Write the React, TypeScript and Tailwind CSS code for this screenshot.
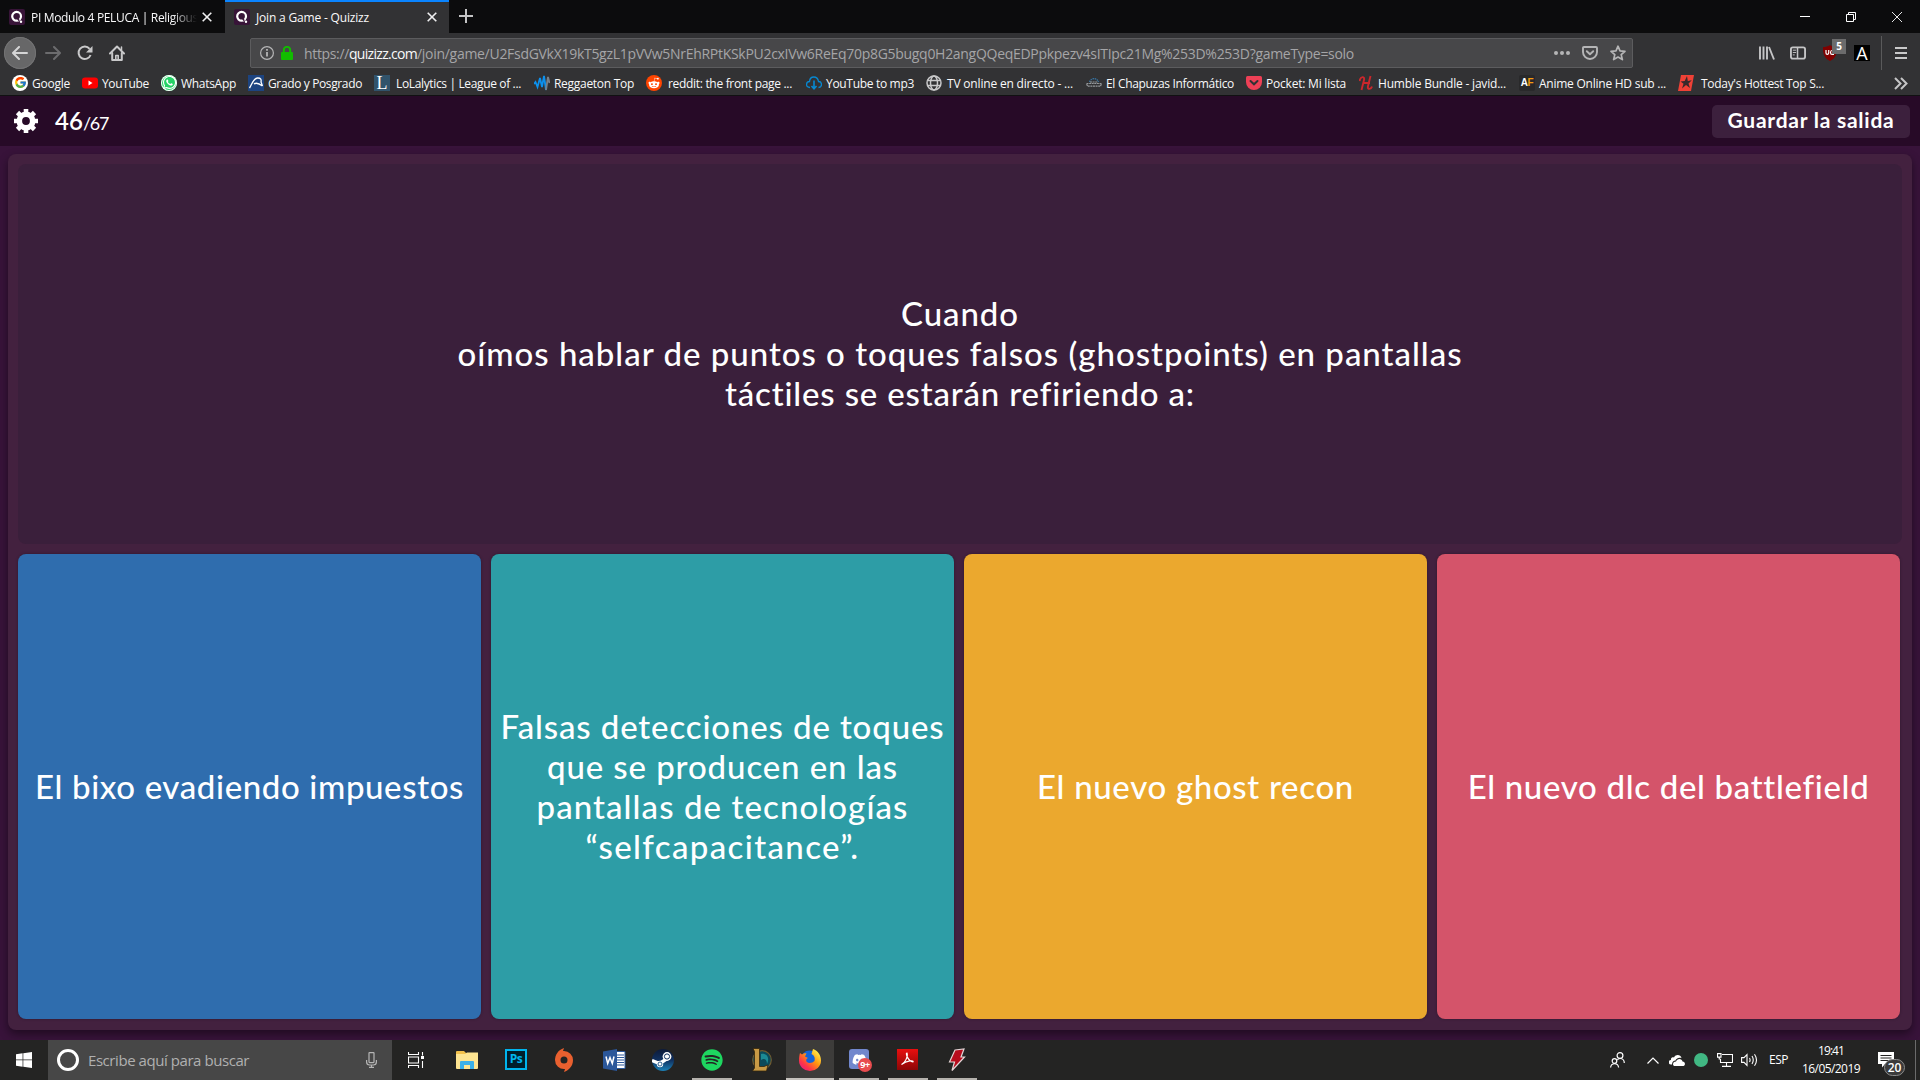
import { useLayoutEffect, useRef, useState } from "react";
import type { ReactNode } from "react";
import { FcGoogle } from "react-icons/fc";
import { FaWhatsapp, FaRedditAlien, FaSpotify, FaDiscord } from "react-icons/fa";

/* Spreads one line of text over an exact width by adjusting its letter spacing. */
function Fit({ w, children, className = "" }: { w: number; children: string; className?: string }) {
  const ref = useRef<HTMLSpanElement>(null);
  const [spacing, setSpacing] = useState(0);
  useLayoutEffect(() => {
    if (ref.current) {
      const natural = ref.current.getBoundingClientRect().width;
      setSpacing((w - natural) / children.length);
    }
  }, [w, children]);
  return (
    <span ref={ref} className={`inline-block whitespace-pre ${className}`} style={{ letterSpacing: `${spacing}px` }}>
      {children}
    </span>
  );
}

function QuizizzIcon() {
  return (
    <svg width="16" height="16" viewBox="0 0 16 16">
      <rect width="16" height="16" rx="2" fill="#381438" />
      <circle cx="7.6" cy="7.3" r="4.4" fill="none" stroke="#fff" strokeWidth="2.2" />
      <path d="M8.5 9.5l1.8 2.2" stroke="#381438" strokeWidth="1.4" />
      <circle cx="12" cy="12.8" r="1.2" fill="#fff" />
    </svg>
  );
}

function CloseX() {
  return (
    <svg width="10" height="10" viewBox="0 0 10 10" stroke="#f0f0f1" strokeWidth="1.6">
      <path d="M.7.7l8.6 8.6M9.3.7L.7 9.3" />
    </svg>
  );
}

function TabBar() {
  return (
    <div className="flex h-[33px] bg-[#0c0c0d] text-[12px] text-[#f9f9fa]">
      <div className="flex w-[225px] items-center pl-[9px] pt-px">
        <QuizizzIcon />
        <div className="ml-[6px] w-[166px] overflow-hidden whitespace-nowrap pt-[2px] [mask-image:linear-gradient(to_right,black_85%,transparent)]">
          <Fit w={167}>PI Modulo 4 PELUCA | Religious</Fit>
        </div>
        <span className="ml-[5px]"><CloseX /></span>
      </div>
      <div className="flex w-[224px] items-center border-t-2 border-[#0a84ff] bg-[#323234] pb-px pl-[9px]">
        <QuizizzIcon />
        <div className="ml-[6px] w-[166px] pt-[2px]">
          <Fit w={113}>Join a Game - Quizizz</Fit>
        </div>
        <span className="ml-[5px]"><CloseX /></span>
      </div>
      <div className="flex items-center pl-[10px] pb-px">
        <svg width="14" height="14" viewBox="0 0 14 14" stroke="#c4c4c5" strokeWidth="2"><path d="M7 0v14M0 7h14" /></svg>
      </div>
      <div className="ml-auto flex items-center pr-[18px]">
        <svg width="10" height="10" viewBox="0 0 10 10" stroke="#fff"><path d="M0 4.500h10" /></svg>
        <svg className="ml-[36px]" width="10" height="10" viewBox="0 0 10 10" stroke="#fff" fill="none"><path d="M.5 2.500h7v7h-7zM2.500 2.500v-2h7v7h-2" /></svg>
        <svg className="ml-[36px]" width="10" height="10" viewBox="0 0 10 10" stroke="#fff" strokeWidth=".9"><path d="M0 0l10 10M10 0L0 10" /></svg>
      </div>
    </div>
  );
}

function NavBar() {
  return (
    <div className="flex h-10 items-center bg-[#323234]">
      <div className="ml-1 flex h-8 w-8 items-center justify-center rounded-full bg-[#676768] ring-1 ring-inset ring-[#737374]">
        <svg width="16" height="14" viewBox="0 0 16 14" fill="none" stroke="#d5d5d6" strokeWidth="2" strokeLinecap="round" strokeLinejoin="round"><path d="M15 7H1.500M7 1L1 7l6 6" /></svg>
      </div>
      <svg className="ml-[9px]" width="16" height="14" viewBox="0 0 16 14" fill="none" stroke="#6c6c6e" strokeWidth="2" strokeLinecap="round" strokeLinejoin="round"><path d="M1 7h13.500M9 1l6 6-6 6" /></svg>
      <svg className="ml-[16px]" width="16" height="16" viewBox="0 0 16 16" fill="none" stroke="#c9c9ca" strokeWidth="2"><path d="M12.600 3.800A6.200 6.200 0 1 0 13.600 10" /><path d="M15.500 1v6.500H9z" fill="#c9c9ca" stroke="none" /></svg>
      <svg className="ml-[16px]" width="16" height="16" viewBox="0 0 16 16" fill="none" stroke="#c9c9ca" strokeWidth="2" strokeLinejoin="round" strokeLinecap="round"><path d="M1 8.500L8 1.500l7 7" /><path d="M3.200 8v7h9.600V8" /><path d="M6.800 15v-4.500h2.400V15" strokeWidth="1.600" /><path d="M12.500 2v3" strokeWidth="1.500" /></svg>
      <div className="ml-[125px] flex h-[30px] w-[1383px] items-center rounded-[2px] border border-[#5c5c5e] bg-[#474749] text-[14px] text-[#a5a5a7]">
        <svg className="ml-[9px]" width="14" height="14" viewBox="0 0 14 14" fill="none" stroke="#b5b5b6"><circle cx="7" cy="7" r="6.400" strokeWidth="1.200" /><path d="M7 6v4.500M7 3v1.700" strokeWidth="1.800" /></svg>
        <svg className="ml-[7px]" width="12" height="14" viewBox="0 0 12 14"><path d="M2.800 7V4a3.200 3.200 0 0 1 6.400 0v3" fill="none" stroke="#12bc00" strokeWidth="2" /><rect y="6" width="12" height="8" rx="1" fill="#12bc00" /></svg>
        <div className="ml-[11px] mt-px flex whitespace-nowrap">
          <Fit w={45}>https://</Fit>
          <Fit w={68} className="text-[#f9f9fa]">quizizz.com</Fit>
          <Fit w={937}>/join/game/U2FsdGVkX19kT5gzL1pVVw5NrEhRPtKSkPU2cxIVw6ReEq70p8G5bugq0H2angQQeqEDPpkpezv4sITIpc21Mg%253D%253D?gameType=solo</Fit>
        </div>
        <div className="ml-auto flex items-center pr-[6px]">
          <svg width="16" height="4" viewBox="0 0 16 4" fill="#b5b5b6"><circle cx="2" cy="2" r="2" /><circle cx="8" cy="2" r="2" /><circle cx="14" cy="2" r="2" /></svg>
          <svg className="ml-[12px]" width="16" height="14" viewBox="0 0 16 14" fill="none" stroke="#b5b5b6" strokeWidth="1.900" strokeLinecap="round" strokeLinejoin="round"><path d="M2 1h12q1 0 1 1v4a7 7 0 0 1-14 0V2q0-1 1-1z" /><path d="M4.800 5.200L8 8.200l3.200-3" /></svg>
          <svg className="ml-[12px]" width="16" height="16" viewBox="0 0 16 16" fill="none" stroke="#b5b5b6" strokeWidth="1.700" strokeLinejoin="round"><path d="M8 1.200l2 4.700 5 .4-3.800 3.300 1.200 5L8 12l-4.400 2.600 1.200-5L1 6.300l5-.4z" /></svg>
        </div>
      </div>
      <svg className="ml-[126px]" width="16" height="14" viewBox="0 0 16 14" fill="none" stroke="#c5c5c6" strokeWidth="1.900"><path d="M1 .5v13M4.500 .5v13M8 .5v13M10 1l5 12.500" /></svg>
      <svg className="ml-[15px]" width="16" height="14" viewBox="0 0 17 14" fill="none" stroke="#c5c5c6"><rect x="1" y="1" width="15" height="12" rx="2" strokeWidth="2" /><path d="M8 1v12" strokeWidth="1.600" /><path d="M3 4h3.500M3 6.500h3.500M3 9h2" strokeWidth="1" /></svg>
      <div className="relative ml-[17px] h-5 w-[23px]">
        <svg className="mt-[2px]" width="14" height="16" viewBox="0 0 14 16"><path d="M7 0c2 1.500 4.500 2 7 2 .3 6-1 11-7 14C1 13-.3 8 0 2c2.500 0 5-.500 7-2z" fill="#800000" /><path d="M3 5v3q0 1.300 1.300 1.300T5.700 8V5M11 5.500H9q-1.500 0-1.500 1.900T9 9.300h2" stroke="#fff" fill="none" strokeWidth="1.200" /></svg>
        <span className="absolute -top-[4px] left-[9px] flex h-[15px] w-[14px] items-center justify-center bg-[#6b6b6c] text-[10px] font-bold text-white">5</span>
      </div>
      <div className="ml-[8px] flex h-4 w-4 items-center justify-center bg-black text-[18px] leading-none text-white">A</div>
      <div className="ml-[11px] h-[34px] w-px bg-[#5a5a5b]" />
      <svg className="ml-[13px]" width="12" height="12" viewBox="0 0 12 12" stroke="#c9c9ca" strokeWidth="2"><path d="M0 1h12M0 6h12M0 11h12" /></svg>
    </div>
  );
}

const bookmarks: { box: string; gap: string; label: string; w: number; icon: ReactNode }[] = [
  { box: "w-[70px]", gap: "ml-[4px]", label: "Google", w: 38, icon: <span className="flex h-4 w-4 items-center justify-center rounded-full bg-white"><FcGoogle size={13} /></span> },
  { box: "w-[79px]", gap: "ml-[4px]", label: "YouTube", w: 47, icon: <svg width="16" height="16" viewBox="0 0 16 16"><rect y="2.500" width="16" height="11" rx="3" fill="#f00" /><path d="M6.500 5.500v5L10.500 8z" fill="#fff" /></svg> },
  { box: "w-[87px]", gap: "ml-[4px]", label: "WhatsApp", w: 55, icon: <span className="flex h-4 w-4 items-center justify-center rounded-full bg-[#25d366] text-white ring-1 ring-inset ring-white"><FaWhatsapp size={15} /></span> },
  { box: "w-[126px]", gap: "ml-[4px]", label: "Grado y Posgrado", w: 94, icon: <svg width="16" height="16" viewBox="0 0 16 16"><rect width="16" height="16" fill="#1d4480" /><path d="M1.500 13C4 9.500 5 3.500 9.500 3c3.500-.2 4 2 3.500 4l1.500 4M6 9c2-1.500 4.500-1 8.500 2" fill="none" stroke="#fff" strokeWidth="1.300" /></svg> },
  { box: "w-[160px]", gap: "ml-[6px]", label: "LoLalytics | League of ...", w: 125, icon: <span className="flex h-4 w-4 items-center justify-center bg-[#31536b] font-['Liberation_Serif'] text-[18px] leading-none text-white">L</span> },
  { box: "w-[112px]", gap: "ml-[4px]", label: "Reggaeton Top", w: 80, icon: <svg width="16" height="16" viewBox="0 0 16 16" fill="none" strokeWidth="1.800"><path d="M0 9l1.500-2 2 5L6 3l2 9 2-11 2 14" stroke="#0c91ee" /><path d="M12 15l2-13 1.500 6" stroke="#77818a" /></svg> },
  { box: "w-[160px]", gap: "ml-[6px]", label: "reddit: the front page ...", w: 124, icon: <span className="flex h-4 w-4 items-center justify-center rounded-full bg-[#ff4500] text-white"><FaRedditAlien size={12} /></span> },
  { box: "w-[120px]", gap: "ml-[4px]", label: "YouTube to mp3", w: 88, icon: <svg width="16" height="16" viewBox="0 0 16 16" fill="none" stroke="#0788d1" strokeWidth="1.300"><path d="M4 12.500C-1 12.500 0 6.500 3.500 6.500c.5-6 8-6 9 0 4 0 4 6 0 6" /><path d="M8 5.500v8M5.500 11L8 13.800l2.500-2.800" strokeWidth="1.600" /></svg> },
  { box: "w-[160px]", gap: "ml-[5px]", label: "TV online en directo - ...", w: 126, icon: <svg width="16" height="16" viewBox="0 0 16 16" fill="none" stroke="#c9c9ca" strokeWidth="1.500"><circle cx="8" cy="8" r="7" /><ellipse cx="8" cy="8" rx="3.500" ry="7" /><path d="M1.500 5.500h13M1.500 10.500h13" /></svg> },
  { box: "w-[160px]", gap: "ml-[4px]", label: "El Chapuzas Informático", w: 128, icon: <svg width="16" height="16" viewBox="0 0 16 16" fill="none" strokeWidth="1.200"><path d="M3.500 7C5 2.500 11 2.500 12.500 7" stroke="#3777a8" strokeDasharray="1.500 .7" /><path d="M.5 8.500h15l-1 2.700h-13zM4 7h8" stroke="#96999c" strokeDasharray="2 .6" /></svg> },
  { box: "w-[113px]", gap: "ml-[4px]", label: "Pocket: Mi lista", w: 80, icon: <svg width="16" height="16" viewBox="0 0 16 16"><path d="M1.500 1h13Q16 1 16 2.500V7A8 8 0 0 1 0 7V2.500Q0 1 1.500 1z" fill="#ee4056" /><path d="M4.500 6L8 9.300 11.500 6" fill="none" stroke="#323234" strokeWidth="2" strokeLinecap="round" /></svg> },
  { box: "w-[160px]", gap: "ml-[3px]", label: "Humble Bundle - javid...", w: 128, icon: <svg width="16" height="16" viewBox="0 0 16 16" fill="none" stroke="#cb272c" strokeWidth="1.900"><path d="M.5 6C1.500 1 6 1 5 5L2.500 15M11.500 1L9 11c-1 4 3 3.500 4 .5M4 8h7" /></svg> },
  { box: "w-[159px]", gap: "ml-[4px]", label: "Anime Online HD sub ...", w: 127, icon: <span className="flex h-4 w-4 items-center justify-center rounded-[2px] bg-[#29292a] font-['Liberation_Sans'] text-[10px] font-bold tracking-[-0.5px] text-white">A<span className="text-[#f49b10]">F</span></span> },
  { box: "w-[180px]", gap: "ml-[7px]", label: "Today's Hottest Top S...", w: 123, icon: <svg width="16" height="16" viewBox="0 0 16 16"><path d="M3 0h13l-3 16H0z" fill="#ef4136" /><path d="M9 1l.8 5 4-.8L10.500 8.500l1.500 4.500-4-3-4 3.500 1.500-4.700L2.500 6.500l4.200-.5z" fill="#38292b" /></svg> },
];

function Bookmarks() {
  return (
    <div className="flex h-[22px] items-center bg-[#323234] pb-px pl-3 text-[12px] text-[#f9f9fa]">
      {bookmarks.map((b) => (
        <div key={b.label} className={`flex shrink-0 items-center ${b.box}`}>
          <span className="flex h-4 w-4 shrink-0 items-center -translate-y-px">{b.icon}</span>
          <span className={`flex ${b.gap}`}><Fit w={b.w}>{b.label}</Fit></span>
        </div>
      ))}
      <svg className="ml-auto mr-[12px]" width="14" height="13" viewBox="0 0 14 13" fill="none" stroke="#c5c5c6" strokeWidth="2"><path d="M1 1l5.500 5.500L1 12M7 1l5.500 5.500L7 12" /></svg>
    </div>
  );
}

const options = [
  { bg: "bg-[#2f6dae]", lines: [["El bixo evadiendo impuestos", 429]] },
  { bg: "bg-[#2d9da6]", lines: [["Falsas detecciones de toques", 444], ["que se producen en las", 351], ["pantallas de tecnologías", 372], ["“selfcapacitance”.", 274]] },
  { bg: "bg-[#eba82e]", lines: [["El nuevo ghost recon", 317]] },
  { bg: "bg-[#d4546a]", lines: [["El nuevo dlc del battlefield", 400]] },
] as { bg: string; lines: [string, number][] }[];

function Quiz() {
  return (
    <main className="flex h-[944px] flex-col overflow-hidden bg-[#38133a] font-['Lato',sans-serif] text-white">
      <header className="flex h-[50px] shrink-0 items-center bg-[#270a27]">
        <svg className="ml-[14px]" width="24" height="24" viewBox="0 0 24 24" fill="none" stroke="#fff">
          <circle cx="12" cy="12" r="6.700" strokeWidth="5.600" />
          <path d="M12 0v4M12 20v4M0 12h4M20 12h4M3.500 3.500l3 3M17.500 17.500l3 3M3.500 20.500l3-3M17.500 6.500l3-3" strokeWidth="4.600" strokeLinejoin="round" />
        </svg>
        <div className="ml-[17px] flex items-baseline">
          <Fit w={28} className="text-[24px] font-semibold">46</Fit>
          <Fit w={25} className="text-[18px] font-normal">/67</Fit>
        </div>
        <button className="ml-auto mr-[10px] flex h-[33px] w-[198px] items-center justify-center rounded-[5px] bg-[#3c203d] pb-[2px] text-[21px] font-bold">
          <Fit w={167}>Guardar la salida</Fit>
        </button>
      </header>
      <section className="mx-2 mt-2 flex h-[876px] flex-col rounded-lg bg-[#43213f] px-[10px] pt-[10px] text-[33px] font-medium leading-[40px] shadow-[0_4px_10px_rgba(0,0,0,0.45)]">
        <div className="flex h-[380px] flex-col items-center justify-center rounded-lg bg-[#3a1f3b] pb-[2px]">
          <Fit w={118}>Cuando</Fit>
          <Fit w={1005}>oímos hablar de puntos o toques falsos (ghostpoints) en pantallas</Fit>
          <Fit w={470}>táctiles se estarán refiriendo a:</Fit>
        </div>
        <div className="mt-[10px] flex gap-[10px]">
          {options.map((o) => (
            <button key={o.bg} className={`flex h-[465px] w-[463px] flex-col items-center justify-center rounded-lg pb-px shadow-[0_0_3px_rgba(0,0,0,0.3)] ${o.bg}`}>
              {o.lines.map(([t, w]) => <Fit key={t} w={w}>{t}</Fit>)}
            </button>
          ))}
        </div>
      </section>
    </main>
  );
}

const apps: { name: string; state: "idle" | "open" | "active"; icon: ReactNode }[] = [
  { name: "explorer", state: "idle", icon: <svg width="22" height="18" viewBox="0 0 22 18"><path d="M0 1q0-1 1-1h7l2 2h11q1 0 1 1v14H0z" fill="#f3c14b" /><path d="M0 3h9l2-1.500h11V17q0 1-1 1H1q-1 0-1-1z" fill="#fde491" /><path d="M4 18v-7q0-1 1-1h12q1 0 1 1v7h-4v-4H8v4z" fill="#3bb0e8" /></svg> },
  { name: "photoshop", state: "idle", icon: <span className="flex h-[21px] w-[22px] -translate-y-px items-center justify-center border-2 border-[#00b5ee] bg-[#001e2b] text-[12px] font-bold leading-none tracking-[-0.5px] text-[#00b5ee]">Ps</span> },
  { name: "origin", state: "idle", icon: <svg className="-translate-x-px" width="20" height="24" viewBox="0 0 20 24"><path d="M10 3a9 9 0 0 1 9 9c0 6-4 10-9 12l1-3A9 9 0 0 1 1 12C1 7 4 2 10 0L9 3.100zM10 8.500a3.500 3.500 0 1 0 0 7 3.500 3.500 0 0 0 0-7z" fill="#e9602f" fillRule="evenodd" /></svg> },
  { name: "word", state: "idle", icon: <svg width="23" height="22" viewBox="0 0 23 22"><path d="M12 2.500h10v17H12z" fill="#fff" stroke="#2b579a" /><path d="M14 6h7M14 8.500h7M14 11h7M14 13.500h7M14 16h7" stroke="#2b579a" strokeWidth="1.200" /><path d="M0 2.500L14 0v22L0 19.500z" fill="#2b579a" /><path d="M3 7.500l1.700 7L7 8.500l2.300 6 1.700-7" fill="none" stroke="#fff" strokeWidth="1.500" /></svg> },
  { name: "steam", state: "idle", icon: <svg width="22" height="22" viewBox="0 0 22 22"><defs><linearGradient id="st" x1="0" y1="0" x2="0" y2="1"><stop offset="0" stopColor="#0d1a38" /><stop offset="0.500" stopColor="#10305f" /><stop offset="1" stopColor="#1c82b8" /></linearGradient></defs><circle cx="11" cy="11" r="11" fill="url(#st)" /><path d="M0 11.500l7.500 3 4-2.500 5-3.500" fill="none" stroke="#fff" strokeWidth="3.400" /><circle cx="15" cy="7.500" r="4.400" fill="#fff" /><circle cx="15" cy="7.500" r="2.600" fill="#fff" stroke="#10305f" strokeWidth="1" /><circle cx="8" cy="15" r="3.200" fill="#fff" /><circle cx="8" cy="15" r="2" fill="none" stroke="#174e81" strokeWidth=".9" /></svg> },
  { name: "spotify", state: "open", icon: <FaSpotify size={22} color="#1ed760" /> },
  { name: "league", state: "idle", icon: <svg width="22" height="24" viewBox="0 0 22 24"><circle cx="12" cy="12" r="9.300" fill="#0c4a5a" stroke="#715b30" strokeWidth="1.200" /><path d="M11 6c6-1 9 4 6 10 0-5-3-6-6-4z" fill="#1c8a94" /><path d="M3 .5h6.500v18H14l4-1.500-1.500 6H2.500L4.500 20V3.500z" fill="#c99a45" stroke="#33260e" strokeWidth=".8" /></svg> },
  { name: "firefox", state: "active", icon: <svg width="22" height="22" viewBox="0 0 22 22"><defs><linearGradient id="fx" x1="1" y1="0" x2="0.100" y2="1"><stop offset="0.100" stopColor="#fff44f" /><stop offset="0.450" stopColor="#ff980e" /><stop offset="0.750" stopColor="#ff3647" /><stop offset="1" stopColor="#e31587" /></linearGradient></defs><circle cx="10.500" cy="10" r="8.500" fill="#1463d8" /><path d="M1 4l2 1.500C5 4 6 4 7.500 4.500L6 7.500l3 1.500c-3 1-2 5 1.500 5 2.500 0 3.500-1 5-2 1-4-1-6-3-7L14 0c5 2 8 6 8 11.500a11 10.500 0 0 1-22 0C0 8 .5 6 1 4z" fill="url(#fx)" /></svg> },
  { name: "discord", state: "open", icon: <span className="relative flex h-[20px] w-[20px] -translate-y-px items-center justify-center rounded-[3px] bg-[#7187cd] text-white"><FaDiscord size={15} /><span className="absolute left-[9px] top-[9px] flex h-[14px] w-[14px] items-center justify-center rounded-full bg-[#e84c4f] text-[9px] font-bold tracking-[-0.5px]">9+</span></span> },
  { name: "acrobat", state: "open", icon: <svg className="-translate-x-px -translate-y-px" width="21" height="21" viewBox="0 0 21 21"><defs><linearGradient id="pdf" x1="0" y1="0" x2="0" y2="1"><stop offset="0" stopColor="#e80f0f" /><stop offset="1" stopColor="#8d0606" /></linearGradient></defs><rect width="21" height="21" fill="url(#pdf)" /><path d="M4.500 15.500c3-1.500 7-7.500 5.500-11.500-2 0 1 8 6 9 1.500-1.800-6-2-11.500 2.500z" fill="none" stroke="#fff" strokeWidth="1.100" /></svg> },
  { name: "flash", state: "open", icon: <svg width="18" height="24" viewBox="0 0 18 24"><path d="M7 2l9-1-3 8h3.500L4 22.500l2.500-8.500H1.500z" fill="#b80c1d" stroke="#e3d5d6" strokeWidth="1.200" /></svg> },
];

function Taskbar() {
  return (
    <footer className="flex h-10 items-center bg-[#242423] text-white">
      <svg className="ml-4" width="16" height="16" viewBox="0 0 16 16" fill="#fff"><path d="M0 2.200l6.600-.9v6.300H0zM7.300 1.200L16 0v7.600H7.300zM0 8.300h6.600v6.400L0 13.800zM7.300 8.300H16V16l-8.700-1.200z" /></svg>
      <div className="ml-4 flex h-10 w-[344px] items-center bg-[#474747]">
        <span className="ml-[9px] h-[22px] w-[22px] rounded-full border-[3px] border-white" />
        <span className="ml-[9px] flex pt-px text-[15px] text-[#b0b0b0]"><Fit w={161}>Escribe aquí para buscar</Fit></span>
        <svg className="ml-auto mr-[15px]" width="11" height="16" viewBox="0 0 11 16" fill="none" stroke="#b5b5b5" strokeWidth="1.200"><rect x="3" y=".6" width="5" height="10" rx=".5" /><path d="M.6 8v2q0 3 3 3h3.800q3 0 3-3V8M5.500 13v2.500M3 15.400h5" /></svg>
      </div>
      <svg className="ml-4" width="16" height="16" viewBox="0 0 16 16" fill="none" stroke="#fff"><path d="M.5 0v2.500h10V0M.5 16v-2.500h10V16M.5 5h10v6H.5zM14.500 0v3.500M14.500 9v7" strokeWidth="1.100" /><path d="M13 4h3v3h-3z" fill="#fff" stroke="none" /></svg>
      <div className="ml-[19px] flex gap-px">
        {apps.map((a) => (
          <div key={a.name} className={`relative flex h-10 w-12 items-center justify-center ${a.state === "active" ? "bg-[#3d3c3a]" : ""}`}>
            {a.icon}
            {a.state === "open" && <span className="absolute bottom-0 left-1 h-[2px] w-10 bg-[#b5b2ad]" />}
            {a.state === "active" && <span className="absolute bottom-0 left-0 h-[2px] w-12 bg-[#c5c2bd]" />}
          </div>
        ))}
      </div>
      <div className="ml-auto flex h-10 items-center">
        <svg width="15" height="16" viewBox="0 0 15 16" fill="none" stroke="#fff" strokeWidth="1.200"><circle cx="10" cy="3.500" r="2.900" /><path d="M14.300 11c0-2.500-1.500-4.500-4-4.500-1.500 0-2.500.8-3 1.500" /><circle cx="4.500" cy="9" r="2.300" /><path d="M.6 15.500c.5-5 7.500-5 8 0" /></svg>
        <svg className="ml-[22px]" width="12" height="7" viewBox="0 0 12 7" fill="none" stroke="#fff" strokeWidth="1.200"><path d="M.5 6.500L6 1l5.500 5.500" /></svg>
        <svg className="ml-[10px]" width="16" height="11" viewBox="0 0 16 11"><path d="M3 9.500H2A2.200 2.200 0 0 1 2 5C1.500 2.500 4 2 5 2.500 7-1.500 12 0 12.500 3 9 2 7 4 6.500 5.500 4.500 5.500 3 7 3 9.500z" fill="#fff" /><path d="M6 11C3 11 3.500 6.500 7 6.500 8 3 13 3 13.500 6.500c3 0 3.500 4.500 0 4.500z" fill="#fff" /></svg>
        <span className="ml-[9px] h-[14px] w-[14px] rounded-full bg-[#41b883]" />
        <svg className="ml-[9px]" width="16" height="14" viewBox="0 0 16 14" fill="none" stroke="#fff" strokeWidth="1.100"><path d="M5 1.500h10.500v8H3.500V6M9.500 9.500v3.500M5 13.400h9M.5.600H4v3.500H.5zM2.200 4v2h1.300" /></svg>
        <svg className="ml-[8px]" width="17" height="14" viewBox="0 0 17 14" fill="none" stroke="#fff" strokeWidth="1.100"><path d="M.6 4.600h2.400L6 1.500v11L3 9.400H.6zM8.500 5q1.200 2 0 4M11 3q2.500 4 0 8M13.500 1.200q4 5.800 0 11.600" /></svg>
        <span className="ml-[11px] flex text-[12px]"><Fit w={19}>ESP</Fit></span>
        <div className="ml-[14px] flex w-[58px] flex-col items-center text-[12px] leading-[18px]">
          <Fit w={26}>19:41</Fit>
          <Fit w={58}>16/05/2019</Fit>
        </div>
        <div className="relative ml-[18px] h-10 w-[37px]">
          <svg className="mt-[12px]" width="16" height="16" viewBox="0 0 16 16"><path d="M0 0h16v12H7l-3 3.500V12H0z" fill="#fff" /><path d="M2.500 3.500h11M2.500 6h11M2.500 8.500h8" stroke="#242423" /></svg>
          <span className="absolute left-[6px] top-[19px] flex h-[17px] w-[21px] items-center justify-center rounded-full border border-[#8a8a8a] bg-[#3b3b3b] text-[12px] font-semibold">20</span>
        </div>
        <div className="h-10 w-px bg-[#6b6b6b]" />
        <div className="w-1" />
      </div>
    </footer>
  );
}

export default function App() {
  return (
    <div className="h-[1080px] w-[1920px] overflow-hidden font-['Open_Sans',sans-serif]">
      <TabBar />
      <NavBar />
      <Bookmarks />
      <div className="h-px bg-[#111112]" />
      <Quiz />
      <Taskbar />
    </div>
  );
}
